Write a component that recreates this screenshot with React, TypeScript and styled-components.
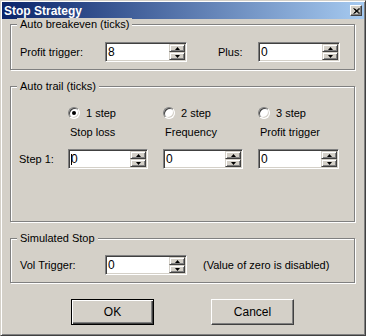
import React from "react";
import styled, { createGlobalStyle } from "styled-components";

const face = "#D4D0C8";
const shadow = "#808080";
const dark = "#404040";

const GlobalStyle = createGlobalStyle`
  html, body {
    margin: 0;
    padding: 0;
    background: ${face};
  }
  body {
    font-family: "Liberation Sans", Arial, sans-serif;
    font-size: 11px;
    color: #000;
  }
`;

const Window = styled.div`
  box-sizing: border-box;
  width: 366px;
  height: 336px;
  background: ${face};
  border: 1px solid;
  border-color: ${face} ${dark} ${dark} ${face};
  box-shadow: inset 1px 1px 0 #fff, inset -1px -1px 0 ${shadow};
  padding: 1px;
  display: flex;
  flex-direction: column;
`;

const TitleBar = styled.div`
  height: 17px;
  display: flex;
  align-items: center;
  padding-left: 2px;
  background: linear-gradient(to right, #0a246a, #a6caf0);
  color: #fff;
  font-weight: bold;
  font-size: 12px;
`;

const TitleText = styled.span`
  flex: 1;
`;

const CloseButton = styled.div`
  box-sizing: border-box;
  width: 12px;
  height: 11px;
  margin-right: 2px;
  background: ${face};
  border: 1px solid;
  border-color: #fff ${dark} ${dark} #fff;
  box-shadow: inset -1px -1px 0 ${shadow};
  display: flex;
  align-items: center;
  justify-content: center;
`;

const Body = styled.div`
  flex: 1;
  display: flex;
  flex-direction: column;
  padding: 5px 9px 0 8px;
`;

const Group = styled.div<{ $h: number }>`
  box-sizing: border-box;
  height: ${(p) => p.$h}px;
  border: 1px solid ${shadow};
  box-shadow: inset 1px 1px 0 #fff, 1px 1px 0 #fff;
  margin-bottom: 16px;
  padding: 0 9px;
  display: flex;
  flex-direction: column;
`;

const Caption = styled.div`
  align-self: flex-start;
  margin: -7px 0 0 -3px;
  padding: 0 3px;
  line-height: 13px;
  background: ${face};
`;

const FieldRow = styled.div<{ $mt: number }>`
  display: flex;
  align-items: center;
  height: 20px;
  margin-top: ${(p) => p.$mt}px;
`;

const FieldLabel = styled.span<{ $w: number }>`
  width: ${(p) => p.$w}px;
  flex-shrink: 0;
`;

const PlusLabel = styled(FieldLabel)`
  margin-left: 31px;
`;

const Note = styled.span`
  margin-left: 16px;
`;

const SpinBox = styled.div<{ $w: number }>`
  box-sizing: border-box;
  width: ${(p) => p.$w}px;
  height: 20px;
  border: 1px solid;
  border-color: ${shadow} #fff #fff ${shadow};
  box-shadow: inset 1px 1px 0 ${dark}, inset -1px -1px 0 ${face};
  background: #fff;
  padding: 1px;
  display: flex;
`;

const SpinText = styled.div`
  flex: 1;
  display: flex;
  align-items: center;
  padding-left: 1px;
  font-size: 12px;
`;

const Caret = styled.span`
  display: inline-block;
  width: 1px;
  height: 11px;
  background: #000;
  margin-right: -1px;
`;

const SpinButtons = styled.div`
  width: 16px;
  display: flex;
  flex-direction: column;
`;

const SpinButton = styled.div`
  box-sizing: border-box;
  height: 8px;
  background: ${face};
  border: 1px solid;
  border-color: ${face} ${dark} ${dark} ${face};
  box-shadow: inset 1px 1px 0 #fff, inset -1px -1px 0 ${shadow};
  display: flex;
  align-items: center;
  justify-content: center;
`;

const TrailRow = styled.div<{ $mt: number; $h: number }>`
  display: grid;
  grid-template-columns: 33px 80px 80px 81px;
  column-gap: 15px;
  align-items: center;
  height: ${(p) => p.$h}px;
  margin-top: ${(p) => p.$mt}px;
`;

const StepLabel = styled.span`
  margin-left: -1px;
  white-space: nowrap;
`;

const RadioItem = styled.label`
  display: flex;
  align-items: center;
  gap: 6px;
`;

const RadioCircle = styled.span<{ $checked: boolean }>`
  box-sizing: border-box;
  width: 12px;
  height: 12px;
  border-radius: 50%;
  border: 1px solid;
  border-color: ${shadow} #fff #fff ${shadow};
  box-shadow: inset 1px 1px 0 ${dark}, inset -1px -1px 0 ${face};
  background: #fff;
  display: flex;
  align-items: center;
  justify-content: center;

  &::after {
    content: "";
    width: 4px;
    height: 4px;
    border-radius: 50%;
    background: #000;
    display: ${(p) => (p.$checked ? "block" : "none")};
  }
`;

const ColumnHead = styled.span`
  padding-left: 2px;
  white-space: nowrap;
`;

const ButtonRow = styled.div`
  display: flex;
  justify-content: center;
  gap: 57px;
`;

const DialogButton = styled.div<{ $default?: boolean }>`
  box-sizing: border-box;
  width: 83px;
  height: 26px;
  display: flex;
  align-items: center;
  justify-content: center;
  background: ${face};
  border: 1px solid;
  border-color: ${(p) =>
    p.$default ? "#000" : `#fff ${dark} ${dark} #fff`};
  box-shadow: ${(p) =>
    p.$default
      ? `inset 1px 1px 0 #fff, inset -1px -1px 0 ${dark}, inset -2px -2px 0 ${shadow}`
      : `inset -1px -1px 0 ${shadow}`};
  font-size: 12px;
`;

const Arrow = ({ up }: { up?: boolean }) => (
  <svg width="5" height="3" viewBox="0 0 5 3">
    <polygon points={up ? "2.5,0 5,3 0,3" : "0,0 5,0 2.5,3"} fill="#000" />
  </svg>
);

const Spinner = ({
  value,
  width,
  focused,
}: {
  value: string;
  width: number;
  focused?: boolean;
}) => (
  <SpinBox $w={width}>
    <SpinText>
      {focused && <Caret />}
      {value}
    </SpinText>
    <SpinButtons>
      <SpinButton>
        <Arrow up />
      </SpinButton>
      <SpinButton>
        <Arrow />
      </SpinButton>
    </SpinButtons>
  </SpinBox>
);

const Radio = ({ label, checked }: { label: string; checked?: boolean }) => (
  <RadioItem>
    <RadioCircle $checked={!!checked} />
    {label}
  </RadioItem>
);

const App: React.FC = () => {
  return (
    <>
      <GlobalStyle />
      <Window>
        <TitleBar>
          <TitleText>Stop Strategy</TitleText>
          <CloseButton>
            <svg width="7" height="6" viewBox="0 0 7 6">
              <path
                d="M0.5 0.5 L6 5.5 M1.5 0.5 L7 5.5 M6 0.5 L0.5 5.5 M7 0.5 L1.5 5.5"
                stroke="#000"
                strokeWidth="1"
              />
            </svg>
          </CloseButton>
        </TitleBar>
        <Body>
          <Group $h={46}>
            <Caption>Auto breakeven (ticks)</Caption>
            <FieldRow $mt={11}>
              <FieldLabel $w={85}>Profit trigger:</FieldLabel>
              <Spinner value="8" width={82} />
              <PlusLabel $w={40}>Plus:</PlusLabel>
              <Spinner value="0" width={82} />
            </FieldRow>
          </Group>

          <Group $h={136}>
            <Caption>Auto trail (ticks)</Caption>
            <TrailRow $mt={12} $h={16}>
              <span />
              <Radio label="1 step" checked />
              <Radio label="2 step" />
              <Radio label="3 step" />
            </TrailRow>
            <TrailRow $mt={3} $h={16}>
              <span />
              <ColumnHead>Stop loss</ColumnHead>
              <ColumnHead>Frequency</ColumnHead>
              <ColumnHead>Profit trigger</ColumnHead>
            </TrailRow>
            <TrailRow $mt={9} $h={20}>
              <StepLabel>Step 1:</StepLabel>
              <Spinner value="0" width={80} focused />
              <Spinner value="0" width={80} />
              <Spinner value="0" width={81} />
            </TrailRow>
          </Group>

          <Group $h={45}>
            <Caption>Simulated Stop</Caption>
            <FieldRow $mt={10}>
              <FieldLabel $w={85}>Vol Trigger:</FieldLabel>
              <Spinner value="0" width={82} />
              <Note>(Value of zero is disabled)</Note>
            </FieldRow>
          </Group>

          <ButtonRow>
            <DialogButton $default>OK</DialogButton>
            <DialogButton>Cancel</DialogButton>
          </ButtonRow>
        </Body>
      </Window>
    </>
  );
};

export default App;
